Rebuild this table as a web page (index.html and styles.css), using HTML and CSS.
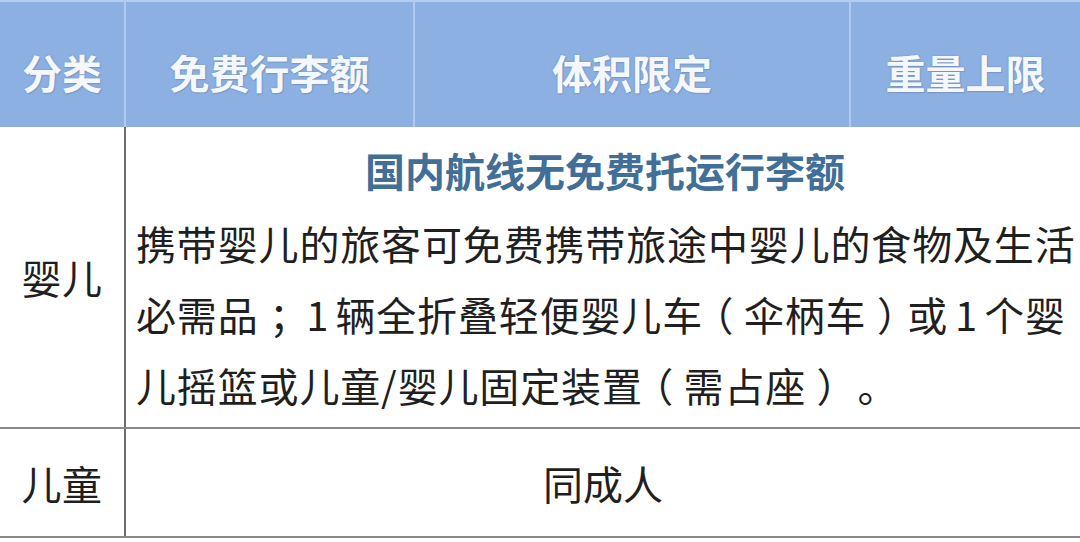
FILE: index.html
```html
<!DOCTYPE html>
<html lang="zh-CN">
<head>
<meta charset="utf-8">
<title>行李额</title>
<link rel="stylesheet" href="styles.css">
</head>
<body>
<div class="table">
  <div class="head">
    <div class="hcell c1">分类</div>
    <div class="hcell c2">免费行李额</div>
    <div class="hcell c3">体积限定</div>
    <div class="hcell c4">重量上限</div>
  </div>
  <div class="row row-infant">
    <div class="label">婴儿</div>
    <div class="content">
      <div class="title">国内航线无免费托运行李额</div>
      <p class="para">携带婴儿的旅客可免费携带旅途中婴儿的食物及生活<br>必需品<span class="p">；</span><span class="num">1</span>辆全折叠轻便婴儿车<span class="p">（</span>伞柄车<span class="p">）</span>或<span class="num">1</span>个婴<br>儿摇篮或儿童/婴儿固定装置<span class="p">（</span>需占座<span class="p">）</span><span class="p">。</span></p>
    </div>
  </div>
  <div class="row row-child">
    <div class="label">儿童</div>
    <div class="content center">同成人</div>
  </div>
</div>
</body>
</html>
```
FILE: styles.css
```css
html, body {
  margin: 0;
  padding: 0;
  background: #ffffff;
}
body {
  width: 1080px;
  height: 542px;
  overflow: hidden;
  font-family: "Noto Sans CJK SC", "Noto Sans", sans-serif;
  color: #1f1f1f;
}
.table {
  width: 1080px;
}
.head {
  display: flex;
  height: 125px;
  background: #8cb0e2;
  border-top: 2px solid #b4ccef;
}
.hcell {
  display: flex;
  align-items: center;
  justify-content: center;
  padding-top: 14px;
  box-sizing: border-box;
  font-size: 40px;
  font-weight: 700;
  color: #f4f8fd;
  text-shadow: 0 0 2px #6f8fb8, 1px 1px 1px #7c9cc6;
  border-right: 2px solid #b0c9ee;
}
.c1 { width: 126px; }
.c2 { width: 289px; }
.c3 { width: 436px; }
.c4 { flex: 1; border-right: none; }

.row {
  display: flex;
  border-bottom: 2px solid #8a8a8a;
}
.row-infant { height: 300px; }
.row-child { height: 107px; }

.label {
  width: 124px;
  border-right: 2px solid #6e6e6e;
  display: flex;
  align-items: center;
  justify-content: center;
  font-size: 40px;
  letter-spacing: 0.5px;
}
.content {
  flex: 1;
  padding: 13px 0 0 10px;
  box-sizing: border-box;
}
.content.center {
  display: flex;
  align-items: center;
  justify-content: center;
  padding: 0;
  font-size: 40px;
}
.title {
  text-align: center;
  font-size: 40px;
  font-weight: 700;
  line-height: 60px;
  color: #416f97;
  padding-right: 6px;
}
.para {
  margin: 8px 0 0 0;
  font-size: 40px;
  line-height: 71px;
  letter-spacing: 0.85px;
  white-space: nowrap;
}
.p {
  display: inline-block;
  width: 40.85px;
  text-align: center;
  font-feature-settings: "halt";
  letter-spacing: 0;
}
.num {
  display: inline-block;
  width: 36px;
  text-align: center;
  letter-spacing: 0;
}
```
